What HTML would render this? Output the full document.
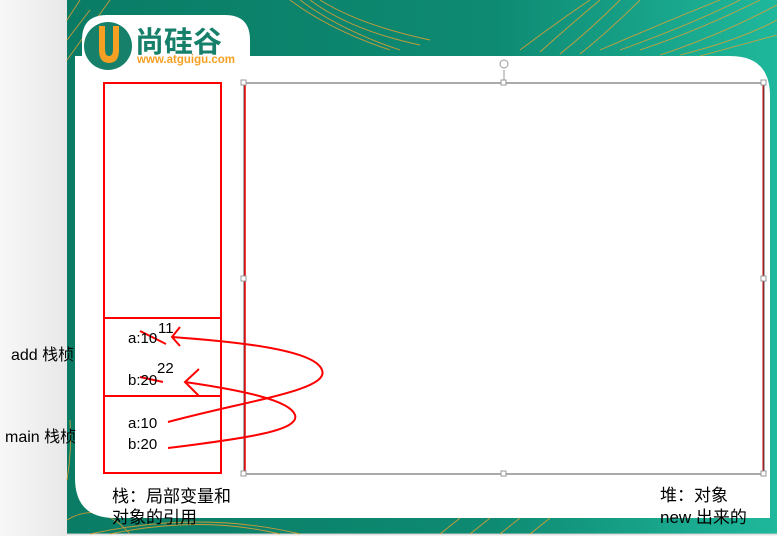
<!DOCTYPE html>
<html><head><meta charset="utf-8"><style>
html,body{margin:0;padding:0;width:777px;height:536px;overflow:hidden;background:#f2f2f2}
svg{position:absolute;left:0;top:0}
</style></head><body>
<svg width="777" height="536" viewBox="0 0 777 536" xmlns="http://www.w3.org/2000/svg" font-family="'Liberation Sans','Noto Sans CJK SC',sans-serif">
<defs>
<linearGradient id="lg" x1="0" x2="1" y1="0" y2="0"><stop offset="0" stop-color="#f7f7f7"/><stop offset="1" stop-color="#e8e8e8"/></linearGradient>
<linearGradient id="bg" x1="0" x2="1" y1="0" y2="0"><stop offset="0" stop-color="#0a7c66"/><stop offset="0.6" stop-color="#0e8a72"/><stop offset="1" stop-color="#1fb89c"/></linearGradient>
</defs>
<rect x="0" y="0" width="67" height="536" fill="url(#lg)"/>
<rect x="67" y="0" width="710" height="534" fill="url(#bg)"/>
<line x1="67" y1="534" x2="777" y2="534" stroke="#ccc"/>
<g stroke="#e8a030" stroke-width="0.9" fill="none" opacity="0.85">
<path d="M290 0 Q330 30 390 50"/><path d="M300 0 Q340 30 400 50"/><path d="M310 0 Q350 30 420 45"/><path d="M320 0 Q360 25 430 40"/>
<path d="M590 0 Q560 20 520 50"/><path d="M600 0 Q570 25 540 52"/><path d="M620 0 Q590 30 560 54"/><path d="M640 0 Q610 30 580 54"/>
<path d="M640 50 Q700 30 760 0"/><path d="M660 55 Q720 35 777 5"/><path d="M680 55 Q740 40 777 20"/><path d="M620 50 Q690 25 740 0"/><path d="M600 50 Q670 20 720 0"/><path d="M700 56 Q740 45 777 35"/>
<path d="M67 40 L90 10"/><path d="M67 60 L110 0"/><path d="M67 20 L80 0"/><path d="M67 520 Q100 500 130 534"/><path d="M90 534 Q200 510 300 534"/><path d="M110 534 Q200 515 280 534"/>
<path d="M500 534 L520 518"/><path d="M470 534 L490 518"/><path d="M440 534 L460 518"/><path d="M530 534 L550 518"/>
<path d="M67 480 Q72 450 70 420"/>
</g>
<path d="M75 56 H730 Q770 56 770 96 V518 H115 Q75 518 75 478 Z" fill="#fff"/>
<path d="M82 56 V40 Q82 15 107 15 H225 Q250 15 250 40 V56 Z" fill="#fff"/>
<circle cx="108" cy="46" r="24" fill="#16806a"/>
<path d="M99 26 V50 Q99 63 109 63 Q119 63 119 50 V26 H113 V49 Q113 56 109 56 Q105 56 105 49 V26 Z" fill="#f5a023"/>
<text x="135" y="52" font-size="29" font-weight="bold" fill="#16806a" font-family="'Noto Sans CJK SC',sans-serif">尚硅谷</text>
<text x="137" y="63" font-size="11.5" font-weight="bold" fill="#f5a023">www.atguigu.com</text>
<rect x="244" y="83" width="520" height="391" fill="none" stroke="#555" stroke-width="1"/>
<line x1="245" y1="83" x2="245" y2="474" stroke="#e00" stroke-width="1.5"/>
<line x1="763" y1="83" x2="763" y2="474" stroke="#c00" stroke-width="1"/>
<g fill="#fff" stroke="#999" stroke-width="1">
<rect x="241" y="80" width="5" height="5"/><rect x="501" y="80" width="5" height="5"/><rect x="761" y="80" width="5" height="5"/>
<rect x="241" y="276" width="5" height="5"/><rect x="761" y="276" width="5" height="5"/>
<rect x="241" y="471" width="5" height="5"/><rect x="501" y="471" width="5" height="5"/><rect x="761" y="471" width="5" height="5"/>
</g>
<line x1="504" y1="70" x2="504" y2="80" stroke="#999"/>
<circle cx="504" cy="64" r="4" fill="none" stroke="#999"/>
<g fill="none" stroke="#f00" stroke-width="2">
<rect x="104" y="83" width="117" height="390"/>
<line x1="104" y1="318" x2="221" y2="318"/><line x1="104" y1="396" x2="221" y2="396"/>
<line x1="140" y1="331" x2="166" y2="344"/><line x1="140" y1="377" x2="163" y2="382"/>
<path d="M168 422 C250 400 330 390 322 370 C315 350 240 342 172 337"/>
<path d="M180 327 L172 337 L180 346"/>
<path d="M168 448 C250 438 300 430 295 415 C290 400 240 390 185 382"/>
<path d="M199 369 L185 382 L199 396"/>
</g>
<g font-size="15" fill="#000">
<text x="128" y="343">a:10</text><text x="158" y="333">11</text>
<text x="128" y="385">b:20</text><text x="157" y="373">22</text>
<text x="128" y="428">a:10</text><text x="128" y="449">b:20</text>
<text x="11" y="360" font-size="16">add 栈桢</text><text x="5" y="442" font-size="16">main 栈桢</text>
<text x="112" y="502" font-size="17">栈：局部变量和</text><text x="112" y="523" font-size="17">对象的引用</text>
<text x="660" y="501" font-size="17">堆：对象</text><text x="660" y="523" font-size="17">new  出来的</text>
</g>
</svg>
</body></html>
